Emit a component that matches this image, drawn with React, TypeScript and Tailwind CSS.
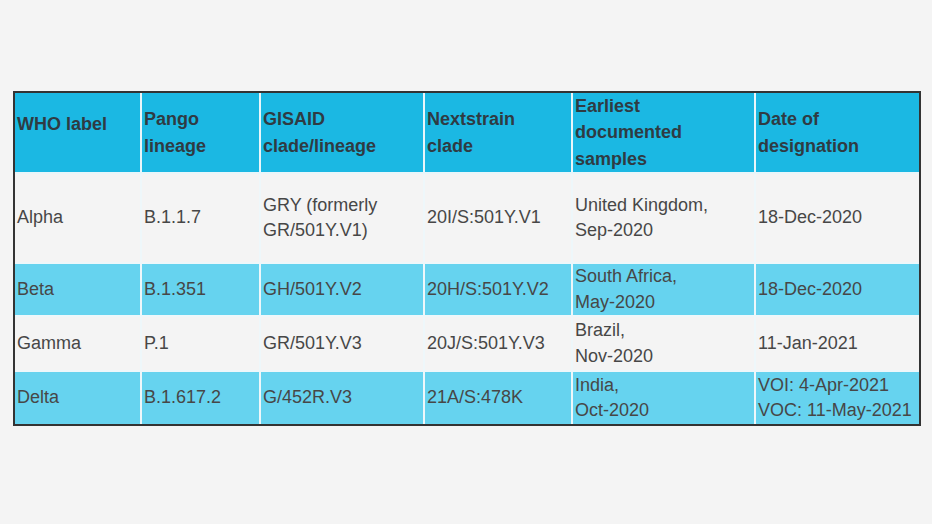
const cols = [126, 119, 164, 148, 183, 164];

type Row = { cells: React.ReactNode[]; h: string; bg: string };

const rows: Row[] = [
  {
    h: "h-[90px]",
    bg: "bg-[#f4f4f4]",
    cells: [
      "Alpha",
      "B.1.1.7",
      <>GRY (formerly<br />GR/501Y.V1)</>,
      "20I/S:501Y.V1",
      <>United Kingdom,<br />Sep-2020</>,
      "18-Dec-2020",
    ],
  },
  {
    h: "h-[53px]",
    bg: "bg-[#66d3ef]",
    cells: [
      "Beta",
      "B.1.351",
      "GH/501Y.V2",
      "20H/S:501Y.V2",
      <>South Africa,<br />May-2020</>,
      "18-Dec-2020",
    ],
  },
  {
    h: "h-[55px]",
    bg: "bg-[#f4f4f4]",
    cells: [
      "Gamma",
      "P.1",
      "GR/501Y.V3",
      "20J/S:501Y.V3",
      <>Brazil,<br />Nov-2020</>,
      "11-Jan-2021",
    ],
  },
  {
    h: "h-[53px]",
    bg: "bg-[#66d3ef]",
    cells: [
      "Delta",
      "B.1.617.2",
      "G/452R.V3",
      "21A/S:478K",
      <>India,<br />Oct-2020</>,
      <>VOI: 4-Apr-2021<br />VOC: 11-May-2021</>,
    ],
  },
];

const headers: React.ReactNode[] = [
  "WHO label",
  <>Pango<br />lineage</>,
  <>GISAID<br />clade/lineage</>,
  <>Nextstrain<br />clade</>,
  <>Earliest<br />documented<br />samples</>,
  <>Date of<br />designation</>,
];

export default function App() {
  return (
    <div className="w-[932px] h-[524px] bg-[#f4f4f4] pt-[91px] pl-[13px] font-['Liberation_Sans',Arial,sans-serif]">
      <div className="w-[908px] border-2 border-[#333]">
        <table className="w-full table-fixed border-collapse border-hidden text-[18px]">
          <colgroup>
            {cols.map((w, i) => (
              <col key={i} style={{ width: w }} />
            ))}
          </colgroup>
          <thead>
            <tr className="h-[80px] bg-[#1bb8e3]">
              {headers.map((h, i) => (
                <th
                  key={i}
                  className={`border-2 border-[#e9f6fa] pl-[2px] text-left align-middle font-bold leading-[26.3px] text-[#2f3b43] ${
                    i === 0 ? "pb-[16px]" : ""
                  }`}
                >
                  {h}
                </th>
              ))}
            </tr>
          </thead>
          <tbody>
            {rows.map((r, ri) => (
              <tr key={ri} className={`${r.h} ${r.bg}`}>
                {r.cells.map((c, ci) => (
                  <td
                    key={ci}
                    className="border-2 border-[#eef7fa] p-0 pl-[2px] align-middle leading-[25.5px] text-[#474747]"
                  >
                    {c}
                  </td>
                ))}
              </tr>
            ))}
          </tbody>
        </table>
      </div>
    </div>
  );
}
